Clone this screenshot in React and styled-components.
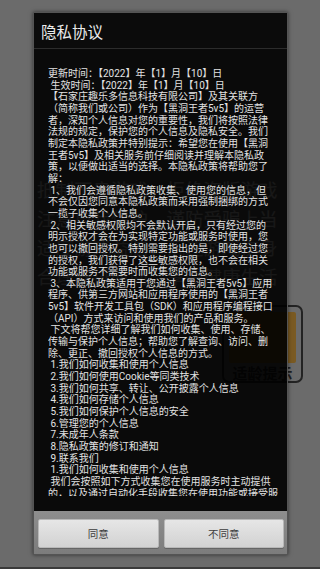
import React from "react";
import styled, { createGlobalStyle } from "styled-components";

const GlobalStyle = createGlobalStyle`
  html, body {
    margin: 0;
    padding: 0;
    width: 320px;
    height: 569px;
    overflow: hidden;
    background: #6b6b6b;
  }
  #root {
    height: 100%;
  }
`;

const Screen = styled.div`
  position: relative;
  width: 320px;
  height: 569px;
  display: flex;
  flex-direction: column;
  font-family: Roboto, "Noto Sans CJK SC", sans-serif;
`;

const Splash = styled.div`
  flex: 1;
  background: #6b6b6b;
  display: flex;
  flex-direction: column;
  padding: 175px 0 0 37px;
`;

const NavEdge = styled.div`
  height: 2px;
  background: #3a3a3a;
`;

const Advice = styled.div`
  font-family: "Noto Sans CJK SC", sans-serif;
  font-size: 18.5px;
  line-height: 29px;
  color: #f0f0f0;
  white-space: nowrap;
`;

const AgeBadge = styled.div`
  align-self: flex-start;
  margin: 14px 0 0 185px;
  width: 81px;
  height: 78px;
  box-sizing: border-box;
  border: 2px solid #232323;
  border-radius: 7px;
  padding: 5px 5px 0;
  display: flex;
  flex-direction: column;
  align-items: center;
`;

const BadgeFill = styled.div`
  align-self: stretch;
  height: 52px;
  background: #7a5a22;
  border-radius: 2px;
`;

const BadgeText = styled.div`
  margin-top: 2px;
  font-family: "Noto Sans CJK SC", sans-serif;
  font-weight: 700;
  font-size: 15px;
  line-height: 16px;
  color: #1e1e1e;
`;

const Dialog = styled.div`
  position: absolute;
  left: 33px;
  top: 12px;
  width: 255px;
  height: 543px;
  box-sizing: border-box;
  border: 1px solid #545454;
  box-shadow: 0 0 4px rgba(0, 0, 0, 0.55);
  display: flex;
  flex-direction: column;
`;

const TitleBar = styled.div`
  height: 35px;
  flex: none;
  background: rgba(8, 8, 8, 0.97);
  border-bottom: 1px solid #2c2c2c;
  display: flex;
  align-items: center;
  padding-left: 7px;
  color: #ececec;
  font-family: "Noto Sans CJK SC", sans-serif;
  font-size: 15.5px;
`;

const Body = styled.div`
  flex: 1;
  min-height: 0;
  background: rgba(0, 0, 0, 0.9);
  padding: 19px 0 15px 14px;
  display: flex;
`;

const Scroll = styled.div`
  flex: 1;
  overflow: hidden;
`;

const Line = styled.div`
  font-size: 10px;
  line-height: 11.66px;
  height: 11.66px;
  color: #e2e2e2;
  white-space: pre;
`;

const ButtonBar = styled.div`
  height: 43px;
  flex: none;
  box-sizing: border-box;
  background: linear-gradient(#8e8e8e, #7c7c7c);
  padding: 8px 3px 5px 4px;
  display: flex;
  gap: 5px;
`;

const Button = styled.button`
  flex: 1;
  height: 29px;
  margin: 0;
  padding: 0;
  border: 1px solid #b8b8b8;
  border-radius: 2px;
  background: linear-gradient(#e6e6e6, #d2d2d2);
  color: #3c3c3c;
  font-family: "Noto Sans CJK SC", sans-serif;
  font-size: 10.5px;
  box-shadow: 0 1px 0 rgba(0, 0, 0, 0.2);
`;

const advice = [
  "抵制不良游戏，拒绝盗版游戏",
  "注意自我保护，谨防受骗上当",
  "适度游戏益脑，沉迷游戏伤身",
  "合理安排时间，享受健康生活",
];

const lines = [
  "更新时间：【2022】年【1】月【10】日",
  " 生效时间：【2022】年【1】月【10】日",
  "【石家庄趣乐多信息科技有限公司】及其关联方",
  "（简称我们或公司）作为【黑洞王者5v5】的运营",
  "者，深知个人信息对您的重要性，我们将按照法律",
  "法规的规定，保护您的个人信息及隐私安全。我们",
  "制定本隐私政策并特别提示：希望您在使用【黑洞",
  "王者5v5】及相关服务前仔细阅读并理解本隐私政",
  "策，以便做出适当的选择。本隐私政策将帮助您了",
  "解：",
  " 1、我们会遵循隐私政策收集、使用您的信息，但",
  "不会仅因您同意本隐私政策而采用强制捆绑的方式",
  "一揽子收集个人信息。",
  " 2、相关敏感权限均不会默认开启，只有经过您的",
  "明示授权才会在为实现特定功能或服务时使用，您",
  "也可以撤回授权。特别需要指出的是，即使经过您",
  "的授权，我们获得了这些敏感权限，也不会在相关",
  "功能或服务不需要时而收集您的信息。",
  " 3、本隐私政策适用于您通过【黑洞王者5v5】应用",
  "程序、供第三方网站和应用程序使用的【黑洞王者",
  "5v5】软件开发工具包（SDK）和应用程序编程接口",
  "（API）方式来访问和使用我们的产品和服务。",
  " 下文将帮您详细了解我们如何收集、使用、存储、",
  "传输与保护个人信息；帮助您了解查询、访问、删",
  "除、更正、撤回授权个人信息的方式。",
  " 1.我们如何收集和使用个人信息",
  " 2.我们如何使用Cookie等同类技术",
  " 3.我们如何共享、转让、公开披露个人信息",
  " 4.我们如何存储个人信息",
  " 5.我们如何保护个人信息的安全",
  " 6.管理您的个人信息",
  " 7.未成年人条款",
  " 8.隐私政策的修订和通知",
  " 9.联系我们",
  " 1.我们如何收集和使用个人信息",
  " 我们会按照如下方式收集您在使用服务时主动提供",
  "的，以及通过自动化手段收集您在使用功能或接受服",
  "务过程中产生的信息。",
];

const App = () => {
  return (
    <Screen>
      <GlobalStyle />
      <Splash>
        <Advice>
          {advice.map((a) => (
            <div key={a}>{a}</div>
          ))}
        </Advice>
        <AgeBadge>
          <BadgeFill />
          <BadgeText>适龄提示</BadgeText>
        </AgeBadge>
      </Splash>
      <NavEdge />
      <Dialog>
        <TitleBar>隐私协议</TitleBar>
        <Body>
          <Scroll>
            {lines.map((l, i) => (
              <Line key={i}>{l}</Line>
            ))}
          </Scroll>
        </Body>
        <ButtonBar>
          <Button>同意</Button>
          <Button>不同意</Button>
        </ButtonBar>
      </Dialog>
    </Screen>
  );
};

export default App;
